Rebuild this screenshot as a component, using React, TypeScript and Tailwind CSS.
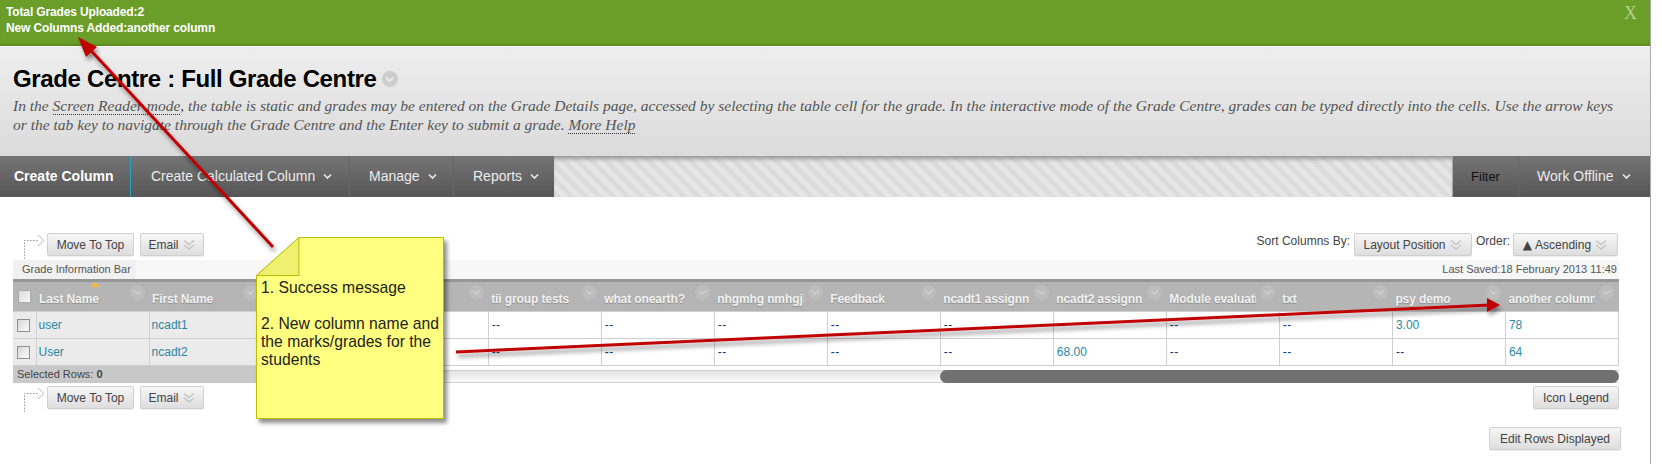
const sans = "font-['Liberation_Sans',Arial,sans-serif]";

function DoubleChevron() {
  return (
    <svg width="14" height="14" viewBox="0 0 14 14" fill="none" stroke="#c4c8c4" strokeWidth="1.6">
      <path d="M2 2.5l5 4 5-4" />
      <path d="M2 7l5 4 5-4" />
    </svg>
  );
}

function NavChevron({ color = "#e8e8e8" }: { color?: string }) {
  return (
    <svg width="9" height="7" viewBox="0 0 9 7" fill="none" stroke={color} strokeWidth="1.6">
      <path d="M1 1.5l3.5 3.5 3.5-3.5" />
    </svg>
  );
}

function Btn({ label, menu, className = "" }: { label: React.ReactNode; menu?: boolean; className?: string }) {
  return (
    <div className={`h-[23px] flex items-center justify-center gap-[3px] rounded-[2px] border border-[#d0d0d0] bg-gradient-to-b from-[#f6f6f6] to-[#dedede] text-[12px] text-[#444] shadow-[0_1px_0_#eee] whitespace-nowrap ${className}`}>
      {label}
      {menu && <DoubleChevron />}
    </div>
  );
}

function DottedArrow() {
  return (
    <svg width="34" height="26" viewBox="0 0 34 26" fill="none" stroke="#999" strokeDasharray="1.5 1.5">
      <path d="M11.5 26V7.5H26" />
      <path d="M25 2l6 5.5-6 5.5" strokeDasharray="none" stroke="#bbb" />
    </svg>
  );
}

function Check({ className = "" }: { className?: string }) {
  return <div className={`w-[13px] h-[13px] border border-[#8f8f8f] bg-gradient-to-br from-[#d8d8d8] to-[#fafafa] ${className}`} />;
}

function HeadCell({ label }: { label: string }) {
  return (
    <th className="p-0 font-normal text-left">
      <div className="flex items-center h-[29px] pl-[3px] pr-[3px]">
        <span className="w-[87px] overflow-hidden whitespace-nowrap text-[12px] font-bold text-[#f2f2f2] mt-[5px] tracking-[-0.1px] [text-shadow:0_1px_1px_#8a8a8a]">{label}</span>
        <span className="ml-[4px] mb-[8px] w-[15px] h-[15px] rounded-full bg-[#bdbdbd] flex items-center justify-center">
          <NavChevron color="#cfcfcf" />
        </span>
      </div>
    </th>
  );
}

const heads = ["Last Name", "First Name", "", "", "tii group tests", "what onearth?", "nhgmhg nmhgjl", "Feedback", "ncadt1 assignn", "ncadt2 assignn", "Module evaluati", "txt", "psy demo", "another column"];

const rows = [
  { last: "user", first: "ncadt1", cells: ["--", "--", "--", "--", "--", "--", "--", "--", "--", "--", "3.00", "78"] },
  { last: "User", first: "ncadt2", cells: ["--", "--", "--", "--", "--", "--", "--", "68.00", "--", "--", "--", "64"] },
];

function Row({ row }: { row: (typeof rows)[number] }) {
  return (
    <tr className="h-[27px]">
      <td className="p-0 bg-[#ebebeb] border border-l-0 border-[#cfcfcf]">
        <Check className="ml-[4px]" />
      </td>
      <td className="px-[2px] py-0 bg-[#ebebeb] border border-[#cfcfcf] text-[#2d87a3]">{row.last}</td>
      <td className="px-[2px] py-0 bg-[#ebebeb] border border-[#cfcfcf] text-[#2d87a3]">{row.first}</td>
      {row.cells.map((c, i) => (
        <td key={i} className={`px-[3px] py-0 border border-[#cfcfcf] ${c === "--" ? "text-[#0a3a78] tracking-[0.5px]" : "text-[#2d87a3]"}`}>{c}</td>
      ))}
    </tr>
  );
}

function Overlay() {
  return (
    <svg className="absolute left-0 top-0 pointer-events-none" width="1662" height="464" viewBox="0 0 1662 464" fill="none">
      <defs>
        <filter id="sh" x="-10%" y="-10%" width="120%" height="130%">
          <feDropShadow dx="2" dy="4" stdDeviation="2" floodColor="#000" floodOpacity="0.4" />
        </filter>
      </defs>
      <g filter="url(#sh)">
        <path d="M273 247L84 43" stroke="#c00000" strokeWidth="3" />
        <path d="M78 37L97 47L86 57Z" fill="#c00000" />
        <path d="M456 352L1490 305" stroke="#c00000" strokeWidth="3" />
        <path d="M1500 305L1487 298L1487 312Z" fill="#c00000" />
      </g>
    </svg>
  );
}

function Note() {
  return (
    <div className="absolute left-[256px] top-[237px] w-[188px] h-[182px]">
      <svg className="absolute inset-0 overflow-visible" width="188" height="182" viewBox="0 0 188 182">
        <defs>
          <filter id="nt" x="-10%" y="-10%" width="120%" height="120%">
            <feDropShadow dx="3" dy="4" stdDeviation="2" floodColor="#000" floodOpacity="0.45" />
          </filter>
        </defs>
        <path d="M43 .5H187.5V181.5H.5V38.5Z" fill="#ffff80" stroke="#bdbd00" filter="url(#nt)" />
        <path d="M43 .5V38.5H.5Z" fill="#efef70" stroke="#bdbd00" />
      </svg>
      <div className="relative pt-[42px] pl-[5px] text-[15.7px] leading-[18px] text-[#222] whitespace-nowrap">
        <p>1. Success message</p>
        <p className="mt-[18px]">
          2. New column name and
          <br />
          the marks/grades for the
          <br />
          students
        </p>
      </div>
    </div>
  );
}

export default function App() {
  return (
    <div className={`relative w-[1662px] h-[464px] overflow-hidden bg-white ${sans}`}>
      <div className="w-[1651px] h-[464px] border-r border-[#aaa]">
        {/* green success banner */}
        <div className="h-[46px] bg-[#6b9e28] flex justify-between pl-[6px] pr-[13px] pt-[5px] shadow-[inset_0_-2px_1px_#5d8c20]">
          <div className="text-[12px] leading-[15.5px] font-bold text-white tracking-[-0.14px]">
            <div>Total Grades Uploaded:2</div>
            <div>New Columns Added:another column</div>
          </div>
          <div className="font-['Liberation_Serif',serif] text-[18px] leading-[16px] text-[#b4d08c]">X</div>
        </div>

        {/* page header */}
        <div className="h-[110px] bg-gradient-to-b from-[#eeeeee] to-[#dbdbdb] border-t border-[#f8f8f8] pl-[13px] pt-[18px]">
          <div className="flex items-center gap-[5px] h-[28px]">
            <h1 className="text-[24px] leading-[28px] font-bold text-black tracking-[-0.35px]">Grade Centre : Full Grade Centre</h1>
            <span className="w-[16px] h-[16px] rounded-full bg-[#cdcdcd] flex items-center justify-center">
              <NavChevron color="#f2f2f2" />
            </span>
          </div>
          <p className="mt-[3px] font-['Liberation_Serif',serif] italic text-[15.5px] leading-[19px] text-[#555] whitespace-nowrap">
            In the <span className="border-b border-dotted border-[#333]">Screen Reader mode</span>, the table is static and grades may be entered on the Grade Details page, accessed by selecting the table cell for the grade. In the interactive mode of the Grade Centre, grades can be typed directly into the cells. Use the arrow keys
            <br />
            or the tab key to navigate through the Grade Centre and the Enter key to submit a grade. <span className="border-b border-dotted border-[#333]">More Help</span>
          </p>
        </div>

        {/* action bar */}
        <div className="h-[41px] flex text-[14px] font-bold text-[#ececec]">
          <div className="flex bg-gradient-to-b from-[#757575] to-[#565656]">
            <div className="w-[131px] pl-[14px] flex items-center text-white border-r border-[#2a9fc0]">Create Column</div>
            <div className="w-[219px] pl-[20px] flex items-center gap-[8px] font-normal border-r border-[#666]">Create Calculated Column <NavChevron /></div>
            <div className="w-[104px] pl-[19px] flex items-center gap-[8px] font-normal border-r border-[#666]">Manage <NavChevron /></div>
            <div className="w-[100px] pl-[19px] flex items-center gap-[8px] font-normal">Reports <NavChevron /></div>
          </div>
          <div className="flex-1 bg-[repeating-linear-gradient(45deg,#dcdcdc_0px,#dcdcdc_5px,#e6e6e6_5px,#e6e6e6_10px)] shadow-[inset_0_5px_4px_-2px_#999]" />
          <div className="flex bg-gradient-to-b from-[#757575] to-[#565656]">
            <div className="w-[67px] flex items-center justify-center text-[13px] text-[#111] font-normal border-l border-[#aaa] border-r-[#666] border-r">Filter</div>
            <div className="w-[131px] pl-[18px] flex items-center gap-[8px] font-normal">Work Offline <NavChevron /></div>
          </div>
        </div>

        {/* top controls */}
        <div className="mt-[36px] h-[27px] pl-[13px] w-[1618px] flex items-start">
          <div className="w-[34px]"><DottedArrow /></div>
          <Btn label="Move To Top" className="w-[87px]" />
          <Btn label="Email" menu className="ml-[6px] w-[64px]" />
          <div className="ml-auto flex items-start text-[12px] text-[#444]">
            <span className="-mt-px">Sort Columns By:</span>
            <Btn label="Layout Position" menu className="ml-[4px] w-[118px]" />
            <span className="ml-[4px] -mt-px">Order:</span>
            <Btn label={<><span className="text-[12px] leading-none font-['DejaVu_Sans',sans-serif]">▲</span>Ascending</>} menu className="ml-[3px] w-[105px]" />
          </div>
        </div>

        {/* grid */}
        <div className="ml-[13px] w-[1606px]">
          <div className="h-[19px] bg-[#f7f7f7] flex items-center justify-between text-[11px] text-[#555]">
            <div className="h-[19px] w-[123px] pl-[9px] bg-[#f1f1f1] flex items-center whitespace-nowrap">Grade Information Bar</div>
            <div className="pr-[2px]">Last Saved:18 February 2013 11:49</div>
          </div>
          <div className="relative">
            <div className="absolute left-[77px] top-[3px] w-0 h-0 border-x-[5px] border-x-transparent border-b-[5px] border-b-[#f5b942]" />
            <table className="table-fixed border-collapse w-[1606px] text-[12px]">
              <colgroup>
                <col className="w-[23px]" />
                {heads.map((_, i) => <col key={i} className="w-[113px]" />)}
              </colgroup>
              <thead>
                <tr className="h-[29px] bg-[#b5b5b5] border-t-[3px] border-[#969696]">
                  <th className="p-0">
                    <Check className="ml-[5px] border-[#aaa]" />
                  </th>
                  {heads.map((h, i) => <HeadCell key={i} label={h} />)}
                </tr>
              </thead>
              <tbody>
                <Row row={rows[0]} />
                <Row row={rows[1]} />
              </tbody>
            </table>
          </div>
          {/* selected rows + scrollbar */}
          <div className="flex h-[17px]">
            <div className="w-[362px] bg-[#c8c8c8] pl-[4px] flex items-center text-[11px] text-[#444]">Selected Rows:&nbsp;<b>0</b></div>
            <div className="flex-1 flex mt-[4px] h-[13px] border-y border-[#cfcfcf] bg-gradient-to-b from-[#e4e4e4] to-[#fafafa]">
              <div className="w-[565px]" />
              <div className="flex-1 rounded-[7px] bg-[#707070] -my-px" />
            </div>
          </div>
          {/* bottom controls */}
          <div className="mt-[3px] flex items-start">
            <div className="w-[34px]"><DottedArrow /></div>
            <Btn label="Move To Top" className="w-[87px]" />
            <Btn label="Email" menu className="ml-[6px] w-[64px]" />
            <Btn label="Icon Legend" className="ml-auto w-[86px]" />
          </div>
        </div>
        <div className="mt-[15px] w-[1621px] flex justify-end">
          <Btn label="Edit Rows Displayed" className="w-[132px]" />
        </div>
      </div>
      <Note />
      <Overlay />
    </div>
  );
}
